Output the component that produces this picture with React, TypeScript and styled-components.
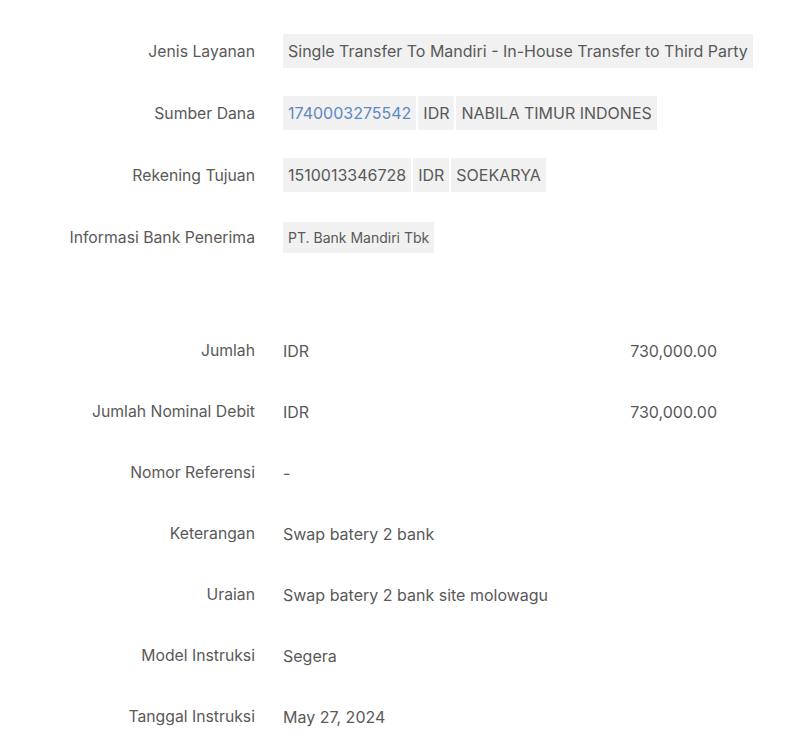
import React from "react";
import styled, { createGlobalStyle } from "styled-components";

const GlobalStyle = createGlobalStyle`
  html, body {
    margin: 0;
    padding: 0;
    background: #ffffff;
  }
  body {
    font-family: Inter, "Noto Sans", "Liberation Sans", sans-serif;
    color: #555;
  }
`;

interface Chip {
  text: string;
  link?: boolean;
}

const infoRows: { label: string; chips: Chip[]; small?: boolean }[] = [
  {
    label: "Jenis Layanan",
    chips: [{ text: "Single Transfer To Mandiri - In-House Transfer to Third Party" }],
  },
  {
    label: "Sumber Dana",
    chips: [
      { text: "1740003275542", link: true },
      { text: "IDR" },
      { text: "NABILA TIMUR INDONES" },
    ],
  },
  {
    label: "Rekening Tujuan",
    chips: [{ text: "1510013346728" }, { text: "IDR" }, { text: "SOEKARYA" }],
  },
  {
    label: "Informasi Bank Penerima",
    chips: [{ text: "PT. Bank Mandiri Tbk" }],
    small: true,
  },
];

const detailRows: { label: string; value: string; amount?: string }[] = [
  { label: "Jumlah", value: "IDR", amount: "730,000.00" },
  { label: "Jumlah Nominal Debit", value: "IDR", amount: "730,000.00" },
  { label: "Nomor Referensi", value: "-" },
  { label: "Keterangan", value: "Swap batery 2 bank" },
  { label: "Uraian", value: "Swap batery 2 bank site molowagu" },
  { label: "Model Instruksi", value: "Segera" },
  { label: "Tanggal Instruksi", value: "May 27, 2024" },
];

const App: React.FC = () => {
  return (
    <Page>
      <GlobalStyle />
      <Section>
        {infoRows.map((row) => (
          <InfoRow key={row.label}>
            <Label>{row.label}</Label>
            <ChipGroup>
              {row.chips.map((chip) => (
                <ChipBox key={chip.text} $link={chip.link} $small={row.small}>
                  {chip.text}
                </ChipBox>
              ))}
            </ChipGroup>
          </InfoRow>
        ))}
      </Section>
      <Section $spaced>
        {detailRows.map((row) => (
          <DetailRow key={row.label}>
            <Label>{row.label}</Label>
            <ValueLine>
              <span>{row.value}</span>
              {row.amount && <Amount>{row.amount}</Amount>}
            </ValueLine>
          </DetailRow>
        ))}
      </Section>
    </Page>
  );
};

export default App;

// Styled Components
const Page = styled.div`
  width: 800px;
  height: 743px;
  padding-top: 20px;
  box-sizing: border-box;
  overflow: hidden;
`;

const Section = styled.div<{ $spaced?: boolean }>`
  display: flex;
  flex-direction: column;
  margin-top: ${(p) => (p.$spaced ? "52px" : "0")};
`;

const InfoRow = styled.div`
  display: grid;
  grid-template-columns: 255px 1fr;
  column-gap: 28px;
  align-items: center;
  height: 62px;
`;

const DetailRow = styled(InfoRow)`
  height: 61px;
`;

const Label = styled.div`
  text-align: right;
  font-size: 15.75px;
  color: #595959;
  white-space: nowrap;
`;

const ChipGroup = styled.div`
  display: flex;
  gap: 2px;
`;

const ChipBox = styled.span<{ $link?: boolean; $small?: boolean }>`
  display: inline-flex;
  align-items: center;
  height: ${(p) => (p.$small ? "31px" : "34px")};
  padding: 0 5px;
  background: #f1f1f1;
  font-size: ${(p) => (p.$small ? "14px" : "16px")};
  color: ${(p) => (p.$link ? "#5d88c2" : "#595959")};
  white-space: nowrap;
`;

const ValueLine = styled.div`
  display: flex;
  justify-content: space-between;
  width: 434px;
  font-size: 16px;
  color: #595959;
`;

const Amount = styled.span`
  color: #595959;
`;
